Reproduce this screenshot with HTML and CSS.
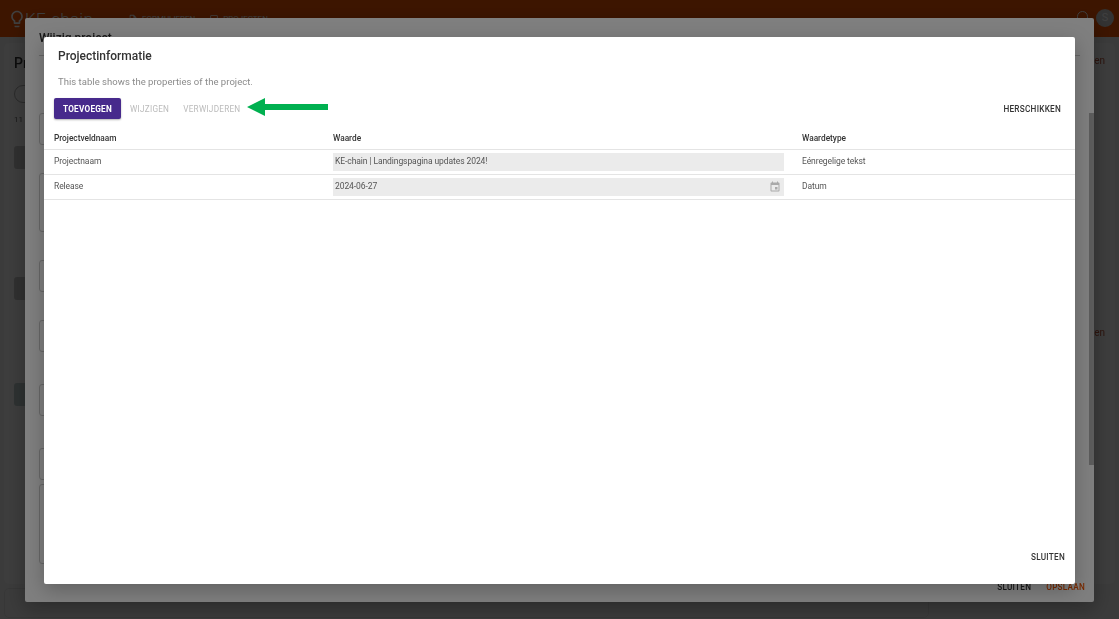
FILE: index.html
```html
<!DOCTYPE html>
<html lang="nl">
	<head>
		<title>KE-chain</title>
		<link rel="stylesheet" href="styles.css">
	</head>
	<body>
		<!-- pagina achter de dialogen -->
		<header class="topbar">
			<svg class="bulb" viewBox="0 0 24 24"><path d="M9 21c0 .55.45 1 1 1h4c.55 0 1-.45 1-1v-1H9v1zm3-19C8.14 2 5 5.14 5 9c0 2.38 1.19 4.47 3 5.74V17c0 .55.45 1 1 1h6c.55 0 1-.45 1-1v-2.26c1.81-1.27 3-3.36 3-5.74 0-3.86-3.14-7-7-7zm2.85 11.1l-.85.6V16h-4v-2.3l-.85-.6C7.8 12.16 7 10.63 7 9c0-2.76 2.24-5 5-5s5 2.24 5 5c0 1.63-.8 3.16-2.15 4.1z"/></svg>
			<span class="brand">KE-chain</span>
			<nav class="topnav">
				<a class="nav-item"><svg class="nav-icon" viewBox="0 0 24 24"><path d="M14 2H6a2 2 0 0 0-2 2v16a2 2 0 0 0 2 2h12a2 2 0 0 0 2-2V8zm4 18H6V4h7v5h5zM8 12h8v2H8zm0 4h8v2H8z"/></svg>FORMULIEREN</a>
				<a class="nav-item"><svg class="nav-icon" viewBox="0 0 24 24"><path d="M19 3H5a2 2 0 0 0-2 2v14a2 2 0 0 0 2 2h14a2 2 0 0 0 2-2V5a2 2 0 0 0-2-2zm0 16H5V5h14z"/></svg>PROJECTEN</a>
			</nav>
			<span class="bell"></span>
			<span class="avatar">S</span>
		</header>
		<main class="page">
			<section class="card">
				<h2 class="card-title">Pr</h2>
				<span class="chip"></span>
				<p class="count">11 p</p>
				<div class="thumb thumb-a"></div>
				<div class="thumb thumb-b"></div>
				<div class="thumb thumb-c"></div>
				<div class="links">
					<a>Kiezen</a>
					<a>Openen</a>
				</div>
			</section>
			<div class="bottom-card"></div>
		</main>

		<!-- eerste dialoog -->
		<div class="scrim scrim-outer">
			<div class="dialog-outer">
				<h2 class="outer-title">Wijzig project</h2>
				<div class="outer-body">
					<div class="field"></div>
					<div class="field field-tall"></div>
					<div class="field"></div>
					<div class="field"></div>
					<div class="field field-apart"></div>
					<div class="field field-apart"></div>
					<div class="field field-large"></div>
				</div>
				<div class="scrollbar"></div>
				<div class="outer-actions">
					<button class="text-btn">SLUITEN</button>
					<button class="text-btn save">OPSLAAN</button>
				</div>
			</div>
		</div>

		<!-- tweede dialoog -->
		<div class="scrim scrim-inner">
			<div class="dialog">
				<h2 class="dialog-title">Projectinformatie</h2>
				<p class="dialog-desc">This table shows the properties of the project.</p>
				<div class="toolbar">
					<button class="btn-primary">TOEVOEGEN</button>
					<button class="text-btn off">WIJZIGEN</button>
					<button class="text-btn off">VERWIJDEREN</button>
					<svg class="arrow" viewBox="0 0 82 18"><path d="M0 9 18 0V6H81V12H18V18Z"/></svg>
					<button class="text-btn reorder">HERSCHIKKEN</button>
				</div>
				<div class="table">
					<div class="row row-head">
						<span>Projectveldnaam</span>
						<span>Waarde</span>
						<span>Waardetype</span>
					</div>
					<div class="row">
						<span>Projectnaam</span>
						<div class="value">KE-chain | Landingspagina updates 2024!</div>
						<span>Eénregelige tekst</span>
					</div>
					<div class="row">
						<span>Release</span>
						<div class="value">2024-06-27
							<svg class="calendar" viewBox="0 0 24 24"><path d="M17 12h-5v5h5v-5zM16 1v2H8V1H6v2H5c-1.11 0-1.99.9-1.99 2L3 19c0 1.1.89 2 2 2h14c1.1 0 2-.9 2-2V5c0-1.1-.9-2-2-2h-1V1h-2zm3 18H5V8h14v11z"/></svg>
						</div>
						<span>Datum</span>
					</div>
				</div>
				<div class="dialog-actions">
					<button class="text-btn">SLUITEN</button>
				</div>
			</div>
		</div>
	</body>
</html>
```

FILE: styles.css
```css
* {
  margin: 0;
  padding: 0;
  box-sizing: border-box;
}

html, body {
  height: 100%;
  overflow: hidden;
}

body {
  background-color: #eee;
  font-family: Roboto, "Liberation Sans", sans-serif;
  color: #333;
}

button {
  border: 0;
  background: none;
  font-family: inherit;
}

/* pagina */
.topbar {
  height: 37px;
  padding: 0 5px 0 7px;
  display: flex;
  align-items: center;
  background-color: #f45500;
  color: #fff;
}

.bulb {
  width: 20px;
  height: 20px;
  fill: #fff;
}

.brand {
  margin-left: -2px;
  font-size: 17px;
  font-weight: 300;
  letter-spacing: .3px;
}

.topnav {
  margin-left: 35px;
  display: flex;
  gap: 14px;
  font-size: 8px;
}

.nav-item {
  display: flex;
  align-items: center;
  gap: 4px;
}

.nav-icon {
  width: 10px;
  height: 10px;
  fill: #fff;
}

.bell {
  width: 11px;
  height: 13px;
  margin-left: auto;
  margin-right: 8px;
  margin-bottom: 2px;
  border: 1px solid #fff;
  border-radius: 6px 6px 0 0;
}

.avatar {
  width: 18px;
  height: 18px;
  margin-bottom: 1px;
  border-radius: 50%;
  background-color: #ccc;
  color: #fff;
  font-size: 11px;
  line-height: 18px;
  text-align: center;
}

.page {
  padding: 6px 4px 0;
  display: flex;
  flex-direction: column;
  filter: blur(.6px);
}

.card {
  height: 541px;
  padding: 11px 10px;
  border-radius: 5px;
  background-color: #f4f4f4;
  position: relative;
}

.card-title {
  font-size: 14px;
  font-weight: 500;
  line-height: 18px;
}

.chip {
  display: block;
  width: 40px;
  height: 18px;
  margin-top: 13px;
  border: 1px solid #aaa;
  border-radius: 9px;
}

.count {
  margin-top: 12px;
  font-size: 8px;
  color: #666;
}

.thumb {
  width: 40px;
  height: 23px;
  background-color: #c4c4c4;
  border-radius: 3px;
}

.thumb-a {
  margin-top: 22px;
}

.thumb-b {
  margin-top: 108px;
}

.thumb-c {
  margin-top: 83px;
  background-color: #b9c9c9;
}

.links {
  position: absolute;
  top: 12px;
  right: 10px;
  display: flex;
  flex-direction: column;
  align-items: flex-end;
  gap: 261px;
  font-size: 10px;
  color: #b5533a;
}

.bottom-card {
  width: 925px;
  height: 30px;
  margin-top: 4px;
  border: 1px solid #ddd;
  border-radius: 5px;
}

/* dialogen */
.scrim {
  position: fixed;
  top: 0;
  right: 0;
  bottom: 0;
  left: 0;
  display: flex;
  background-color: rgba(0, 0, 0, .5);
}

.scrim-outer {
  padding: 18px 25px 17px;
}

.scrim-inner {
  padding: 37px 44px 35px;
}

.dialog-outer {
  flex: 1;
  padding: 12px 14px 0;
  display: flex;
  flex-direction: column;
  border-radius: 2px;
  background-color: #fff;
  position: relative;
  box-shadow: 0 6px 20px rgba(0, 0, 0, .3);
}

.outer-title {
  padding-bottom: 9px;
  border-bottom: 1px solid #ccc;
  font-size: 12px;
  font-weight: 500;
  line-height: 16px;
}

.outer-body {
  flex: 1;
  padding-top: 57px;
  display: flex;
  flex-direction: column;
  gap: 28px;
}

.field {
  height: 32px;
  width: 200px;
  border: 1px solid #cfcfcf;
  border-radius: 3px;
}

.field-tall {
  height: 59px;
}

.field-apart {
  margin-top: 4px;
}

.field-large {
  height: 80px;
  margin-top: -24px;
}

.scrollbar {
  position: absolute;
  top: 95px;
  right: 0;
  width: 5px;
  height: 352px;
  background-color: #b8b8b8;
}

.outer-actions {
  height: 23px;
  margin-bottom: 4px;
  margin-right: -5px;
  display: flex;
  justify-content: flex-end;
  gap: 15px;
}

.dialog {
  flex: 1;
  display: flex;
  flex-direction: column;
  border-radius: 2px;
  background-color: #fff;
  box-shadow: 0 6px 20px rgba(0, 0, 0, .25);
}

.dialog-title {
  margin: 11px 14px 0;
  font-size: 12px;
  font-weight: 500;
  line-height: 16px;
  color: #333;
}

.dialog-desc {
  margin: 11px 14px 0;
  font-size: 9.5px;
  line-height: 14px;
  letter-spacing: .03px;
  color: #8a8a8a;
}

.toolbar {
  height: 21px;
  margin-top: 9px;
  padding: 0 14px 0 10px;
  display: flex;
  align-items: center;
}

.btn-primary {
  width: 67px;
  height: 21px;
  border-radius: 2px;
  background-color: #472a8c;
  color: #fff;
  font-size: 8.2px;
  font-weight: 700;
  letter-spacing: .25px;
  box-shadow: 0 1px 2px rgba(0, 0, 0, .3);
}

.text-btn {
  font-size: 8.2px;
  font-weight: 500;
  letter-spacing: .25px;
  color: #333;
}

.save {
  color: #f45500;
}

.off {
  margin-left: 9px;
  color: #bbb;
  font-weight: 400;
}

.off + .off {
  margin-left: 14px;
}

.arrow {
  width: 82px;
  height: 18px;
  margin-left: 7px;
  margin-bottom: 3px;
  fill: #00b050;
}

.reorder {
  margin-left: auto;
}

.table {
  margin-top: 10px;
  font-size: 8.5px;
  letter-spacing: -.08px;
  color: #555;
}

.row {
  height: 25px;
  padding: 3px 0 3px 10px;
  display: grid;
  grid-template-columns: 261px 451px 1fr;
  column-gap: 18px;
  align-items: center;
  border-bottom: 1px solid #e4e4e4;
}

.row span {
  margin-bottom: 2px;
}

.row-head {
  height: 21px;
  padding-bottom: 3px;
  color: #333;
  font-size: 8.3px;
  font-weight: 500;
  letter-spacing: 0;
}

.value {
  height: 18px;
  padding: 0 3px 2px 2px;
  display: flex;
  align-items: center;
  justify-content: space-between;
  background-color: #ebebeb;
  color: #555;
}

.calendar {
  width: 12px;
  height: 12px;
  margin-top: 2px;
  fill: #aaa;
}

.dialog-actions {
  margin-top: auto;
  padding: 0 10px 22px 0;
  display: flex;
  justify-content: flex-end;
}
```
